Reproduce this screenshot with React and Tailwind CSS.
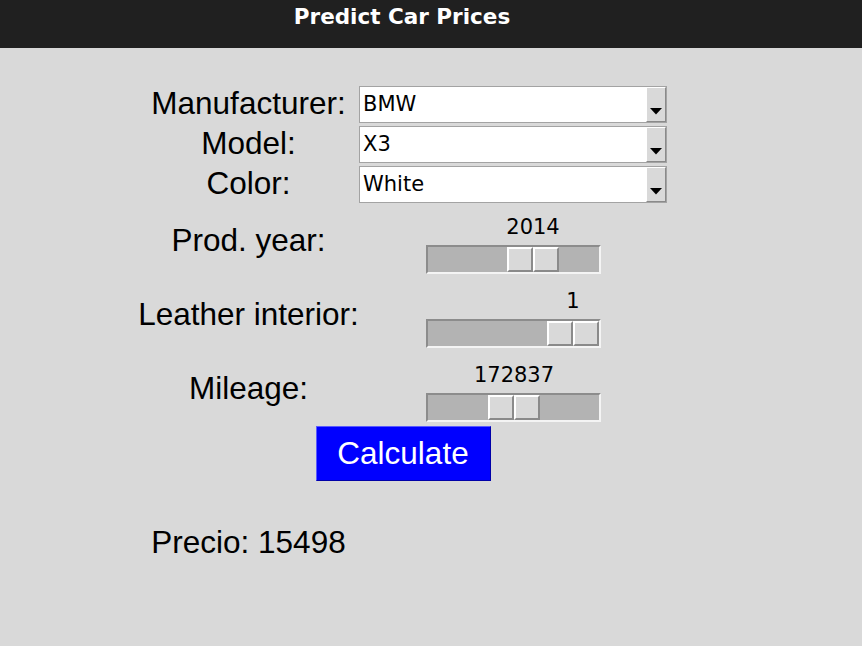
import React from "react";

const combos = [
  { label: "Manufacturer:", value: "BMW" },
  { label: "Model:", value: "X3" },
  { label: "Color:", value: "White" },
];

const sliders = [
  { label: "Prod. year:", value: "2014", pos: 0.664 },
  { label: "Leather interior:", value: "1", pos: 1 },
  { label: "Mileage:", value: "172837", pos: 0.504 },
];

const labelFont = "font-['Liberation_Sans',Arial,sans-serif] text-[31.5px] text-black";
const smallFont = "font-['DejaVu_Sans',sans-serif] text-[21px] text-black";

const Combo = ({ value }) => (
  <div className="flex h-[37px] w-[308px] border border-[#a3a3a3] bg-white">
    <div className={`flex flex-1 items-center pl-[3px] leading-none ${smallFont}`}>
      {value}
    </div>
    <div className="flex w-[20px] items-end justify-center border border-t-white border-l-white border-r-[#8a8a8a] border-b-[#8a8a8a] bg-[#d9d9d9] pb-[6px]">
      <svg width="12" height="7" viewBox="0 0 12 7">
        <polygon points="0,0 12,0 6,6.5" fill="#000" />
      </svg>
    </div>
  </div>
);

const Slider = ({ value, pos }) => {
  const left = Math.round(pos * 119);
  return (
    <div className="relative h-[66px] w-[175px]">
      <div
        className={`absolute top-[7px] leading-[24px] -translate-x-1/2 ${smallFont}`}
        style={{ left: left + 28 }}
      >
        {value}
      </div>
      <div className="absolute bottom-0 left-0 h-[29px] w-[175px] border-2 border-t-[#8c8c8c] border-l-[#8c8c8c] border-r-[#f4f4f4] border-b-[#f4f4f4] bg-[#b3b3b3]">
        <div className="absolute top-0 flex h-[25px] w-[52px]" style={{ left }}>
          <div className="h-full w-[26px] border-2 border-t-white border-l-white border-r-[#8a8a8a] border-b-[#8a8a8a] bg-[#d9d9d9]" />
          <div className="h-full w-[26px] border-2 border-t-white border-l-white border-r-[#8a8a8a] border-b-[#8a8a8a] bg-[#d9d9d9]" />
        </div>
      </div>
    </div>
  );
};

export default function App() {
  return (
    <div className="h-[646px] w-[862px] overflow-hidden bg-[#d9d9d9]">
      {/* Title bar */}
      <div className="h-[48px] bg-[#202020] pr-[58px]">
        <div className="flex h-[34px] items-center justify-center font-['DejaVu_Sans',sans-serif] text-[21.5px] font-bold text-white">
          Predict Car Prices
        </div>
      </div>

      {/* Form */}
      <div className="pl-[138px] pt-[36px]">
        <div className="grid w-[530px] grid-cols-[221px_309px]">
          {combos.map((c) => (
            <React.Fragment key={c.label}>
              <div className={`flex h-[40px] items-center justify-center ${labelFont}`}>
                {c.label}
              </div>
              <div className="flex h-[40px] items-center">
                <Combo value={c.value} />
              </div>
            </React.Fragment>
          ))}

          {sliders.map((s) => (
            <React.Fragment key={s.label}>
              <div className={`flex h-[74px] items-center justify-center ${labelFont}`}>
                {s.label}
              </div>
              <div className="flex h-[74px] items-center justify-center">
                <Slider value={s.value} pos={s.pos} />
              </div>
            </React.Fragment>
          ))}

          <div className="col-span-2 flex h-[55px] justify-center">
            <button className="h-[55px] w-[175px] border border-t-[#5a5aff] border-l-[#5a5aff] border-r-[#0000a8] border-b-[#0000a8] bg-[#0000ff] font-['Liberation_Sans',Arial,sans-serif] text-[31.5px] text-white">
              Calculate
            </button>
          </div>

          <div className={`mt-[42px] flex h-[40px] items-center justify-center ${labelFont}`}>
            Precio: 15498
          </div>
        </div>
      </div>
    </div>
  );
}
